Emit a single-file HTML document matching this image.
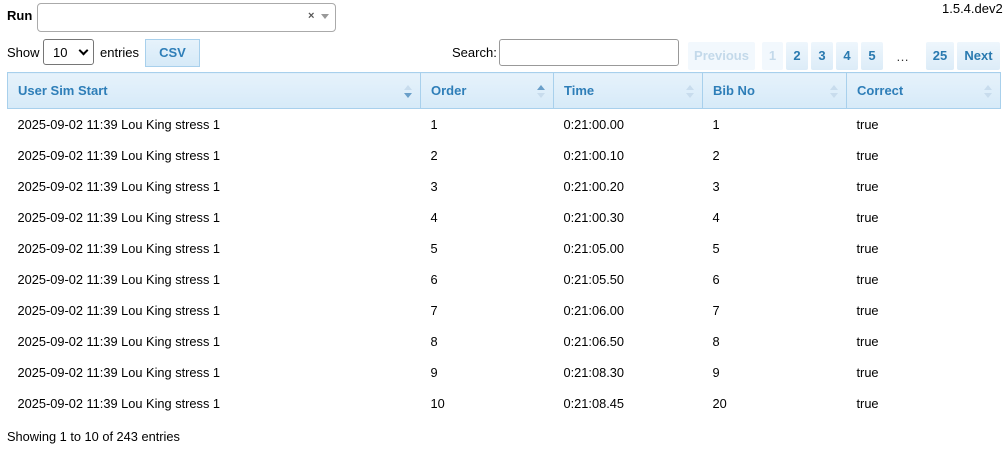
<!DOCTYPE html>
<html><head><style>
body{margin:0;width:1005px;height:454px;font-family:"Liberation Sans",sans-serif;font-size:13px;color:#000;background:#fff;position:relative;overflow:hidden}
.a{position:absolute}
.btn{position:absolute;top:42px;height:28px;line-height:28px;text-align:center;font-weight:bold;font-size:13px;color:#2a7ab0;background:linear-gradient(#eef6fc,#dcecf8);border-radius:2px}
.dis{color:#c3d9ea;background:#f2f8fd}
table{position:absolute;left:7px;top:72px;width:994px;border-collapse:collapse}
th{height:35px;text-align:left;padding:0 10px;color:#2e7eb8;font-weight:bold;font-size:13px;background:linear-gradient(#e6f2fb,#d6eaf8);border:1px solid #a8d0ec;position:relative}
td{height:31px;padding:0 10px;font-size:12.8px}
.s{position:absolute;right:12px;top:12px;width:0}
.s:before{content:"";position:absolute;border:4px solid transparent;border-bottom:5px solid #c8dced;border-top:0;left:-4px;top:0}
.s:after{content:"";position:absolute;border:4px solid transparent;border-top:5px solid #c8dced;border-bottom:0;left:-4px;top:8px}
.d:after{border-top-color:#6a9fc9}.u:before{border-bottom-color:#6a9fc9}
</style></head><body>
<div class="a" style="left:7px;top:8px;font-weight:bold">Run</div>
<div class="a" style="left:37px;top:3px;width:297px;height:27px;border:1px solid #aaa;border-radius:4px"></div>
<div class="a" style="left:308px;top:10px;font-size:11px;font-weight:bold;color:#555">×</div>
<div class="a" style="left:321px;top:14px;border:4px solid transparent;border-top:5px solid #999"></div>
<div class="a" style="left:942px;top:1px">1.5.4.dev2</div>
<div class="a" style="left:7px;top:45px">Show</div>
<div class="a" style="left:43px;top:39px;width:51px;height:26px;border:1px solid #767676;border-radius:3px;box-sizing:border-box;padding:5px 0 0 9px">10</div>
<div class="a" style="left:80px;top:47px;border-right:2px solid #000;border-bottom:2px solid #000;transform:rotate(45deg);width:5px;height:5px"></div>
<div class="a" style="left:100px;top:45px">entries</div>
<div class="a" style="left:145px;top:39px;width:53px;height:26px;border:1px solid #a8d0ec;background:linear-gradient(#e6f2fb,#d6eaf8);color:#2e7eb8;font-weight:bold;text-align:center;line-height:26px">CSV</div>
<div class="a" style="left:452px;top:45px">Search:</div>
<div class="a" style="left:499px;top:39px;width:178px;height:25px;border:1px solid #999;border-radius:3px"></div>
<div class="btn dis" style="left:688px;width:67px">Previous</div>
<div class="btn dis" style="left:762px;width:21px">1</div>
<div class="btn" style="left:786px;width:22px">2</div>
<div class="btn" style="left:811px;width:22px">3</div>
<div class="btn" style="left:836px;width:22px">4</div>
<div class="btn" style="left:861px;width:22px">5</div>
<div class="a" style="left:896px;top:49px;color:#333">…</div>
<div class="btn" style="left:926px;width:28px">25</div>
<div class="btn" style="left:957px;width:43px">Next</div>
<table>
<tr><th style="width:392px">User Sim Start<span class="s d"></span></th><th style="width:112px">Order<span class="s u"></span></th><th style="width:128px">Time<span class="s"></span></th><th style="width:123px">Bib No<span class="s"></span></th><th>Correct<span class="s"></span></th></tr>
<tr><td>2025-09-02 11:39 Lou King stress 1</td><td>1</td><td>0:21:00.00</td><td>1</td><td>true</td></tr>
<tr><td>2025-09-02 11:39 Lou King stress 1</td><td>2</td><td>0:21:00.10</td><td>2</td><td>true</td></tr>
<tr><td>2025-09-02 11:39 Lou King stress 1</td><td>3</td><td>0:21:00.20</td><td>3</td><td>true</td></tr>
<tr><td>2025-09-02 11:39 Lou King stress 1</td><td>4</td><td>0:21:00.30</td><td>4</td><td>true</td></tr>
<tr><td>2025-09-02 11:39 Lou King stress 1</td><td>5</td><td>0:21:05.00</td><td>5</td><td>true</td></tr>
<tr><td>2025-09-02 11:39 Lou King stress 1</td><td>6</td><td>0:21:05.50</td><td>6</td><td>true</td></tr>
<tr><td>2025-09-02 11:39 Lou King stress 1</td><td>7</td><td>0:21:06.00</td><td>7</td><td>true</td></tr>
<tr><td>2025-09-02 11:39 Lou King stress 1</td><td>8</td><td>0:21:06.50</td><td>8</td><td>true</td></tr>
<tr><td>2025-09-02 11:39 Lou King stress 1</td><td>9</td><td>0:21:08.30</td><td>9</td><td>true</td></tr>
<tr><td>2025-09-02 11:39 Lou King stress 1</td><td>10</td><td>0:21:08.45</td><td>20</td><td>true</td></tr>
</table>
<div class="a" style="left:7px;top:429px;font-size:12.8px">Showing 1 to 10 of 243 entries</div>
</body></html>
